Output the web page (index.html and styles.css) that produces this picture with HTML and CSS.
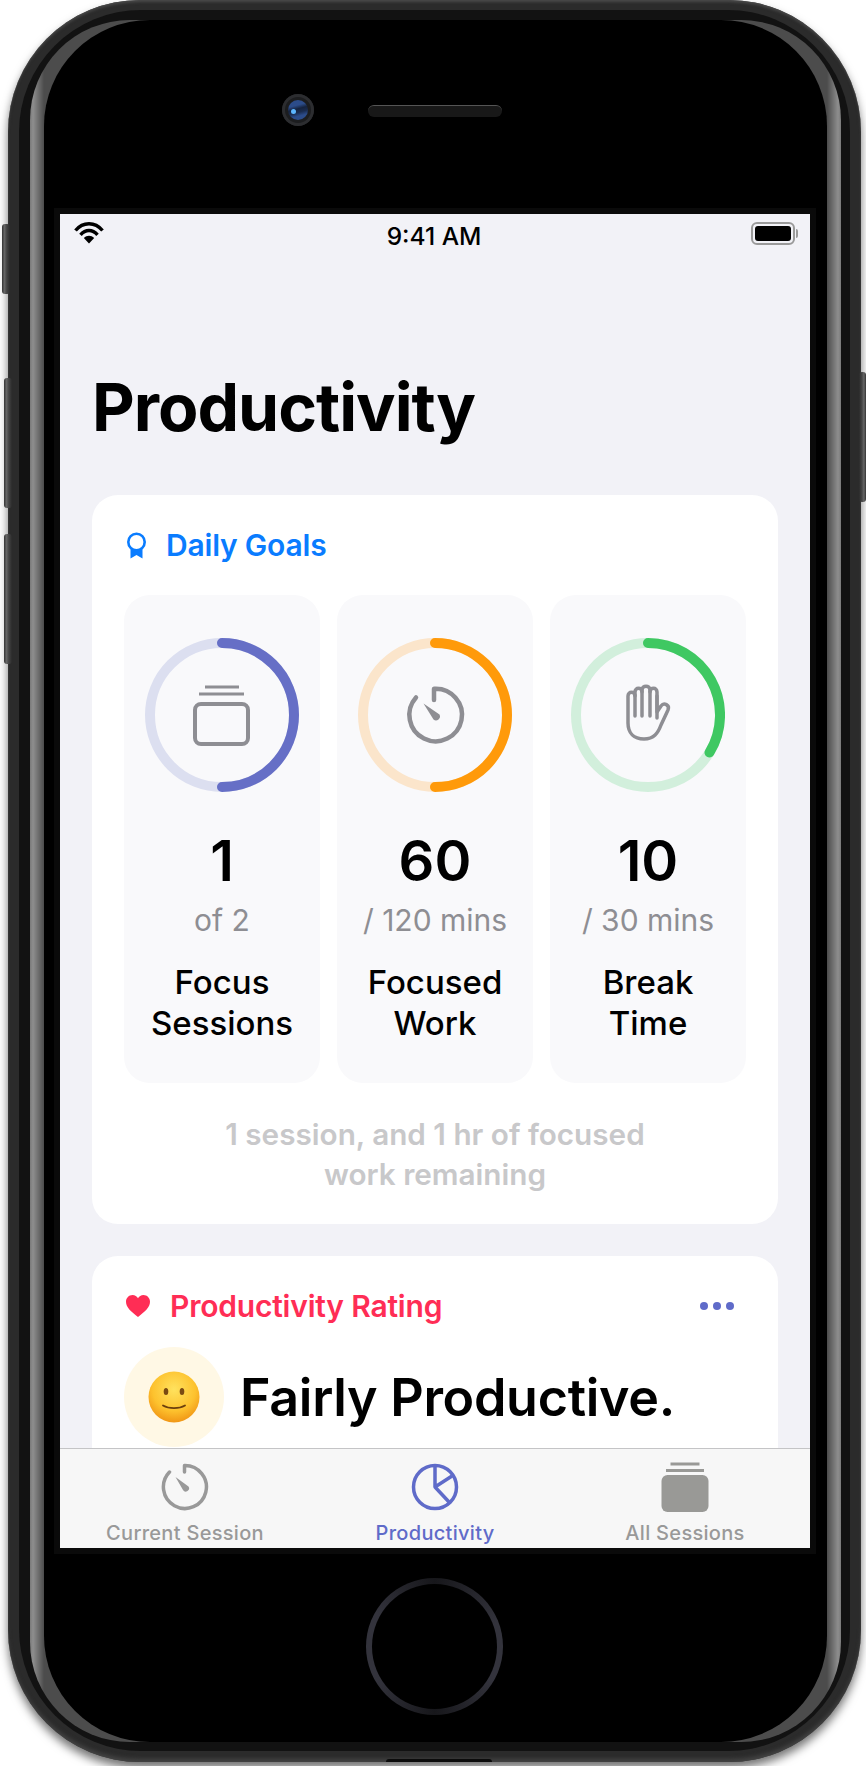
FILE: index.html
```html
<!DOCTYPE html>
<html>
<head>
  <meta charset="utf-8" />
  <meta name="viewport" content="width=device-width, initial-scale=1" />
  <title>Productivity</title>
  <link rel="stylesheet" href="styles.css">
</head>
<body>
  <div class="phone">
    <div class="side-btn mute"></div>
    <div class="side-btn vol-up"></div>
    <div class="side-btn vol-down"></div>
    <div class="side-btn power"></div>

    <div class="rim">
      <div class="edge">
        <div class="glass">
          <div class="top-sensors">
            <div class="camera"><div class="lens"><div class="lens-dot"></div></div></div>
            <div class="speaker"></div>
          </div>

          <div class="screen">
            <div class="status-bar">
              <svg class="wifi" width="30" height="22" viewBox="0 0 30 22">
                <path d="M1.500 8.500C9 -.5 21 -.5 28.500 8.500" fill="none" stroke="#000" stroke-width="3.400"/>
                <path d="M6.500 12.800C11.500 7 18.500 7 23.500 12.800" fill="none" stroke="#000" stroke-width="3.400"/>
                <path d="M15 21.500L9.800 16C13 13 17 13 20.200 16z" fill="#000"/>
              </svg>
              <div class="clock">9:41 AM</div>
              <div class="battery"><div class="battery-fill"></div></div>
            </div>

            <div class="content">
              <h1 class="page-title">Productivity</h1>

              <div class="card goals-card">
                <div class="card-head">
                  <svg class="head-icon" width="21" height="27" viewBox="0 0 21 27">
                    <circle cx="10.500" cy="10" r="8.200" fill="none" stroke="#0a7cff" stroke-width="2.600"/>
                    <path d="M4.500 16.500V26.500L10.500 23L16.500 26.500V16.500L10.500 19z" fill="#0a7cff"/>
                  </svg>
                  <span class="head-title blue">Daily Goals</span>
                </div>

                <div class="tiles">
                  <div class="tile">
                    <svg class="ring" width="154" height="154" viewBox="0 0 154 154">
                      <circle cx="77" cy="77" r="72" fill="none" stroke="#dcdff0" stroke-width="10"/>
                      <path d="M77 5A72 72 0 0 1 77 149" fill="none" stroke="#666fc6" stroke-width="10" stroke-linecap="round"/>
                      <g fill="none" stroke="#8e8e93">
                        <rect x="50" y="66" width="53" height="40" rx="6" stroke-width="4"/>
                        <path d="M54 56H99" stroke-width="3"/>
                        <path d="M60 49H94" stroke-width="3"/>
                      </g>
                    </svg>
                    <div class="tile-num">1</div>
                    <div class="tile-sub">of 2</div>
                    <div class="tile-label">Focus Sessions</div>
                  </div>

                  <div class="tile">
                    <svg class="ring" width="154" height="154" viewBox="0 0 154 154">
                      <circle cx="77" cy="77" r="72" fill="none" stroke="#fbe5cb" stroke-width="10"/>
                      <path d="M77 5A72 72 0 0 1 77 149" fill="none" stroke="#ff9a0a" stroke-width="10" stroke-linecap="round"/>
                      <path d="M76 62V50.700A26.300 26.300 0 1 1 58 59.500" fill="none" stroke="#8e8e93" stroke-width="4.500" stroke-linecap="round" stroke-linejoin="round"/>
                      <path d="M65.500 65.500L75.500 81.500A4 4 0 0 0 81.500 76.500z" fill="#8e8e93"/>
                    </svg>
                    <div class="tile-num">60</div>
                    <div class="tile-sub">/ 120 mins</div>
                    <div class="tile-label">Focused Work</div>
                  </div>

                  <div class="tile">
                    <svg class="ring" width="154" height="154" viewBox="0 0 154 154">
                      <circle cx="77" cy="77" r="72" fill="none" stroke="#d2efdc" stroke-width="10"/>
                      <path d="M77 5A72 72 0 0 1 138.500 114.500" fill="none" stroke="#3fc862" stroke-width="10" stroke-linecap="round"/>
                      <g transform="translate(0 2)" fill="none" stroke="#8e8e93" stroke-width="3.500" stroke-linecap="round" stroke-linejoin="round">
                        <path d="M57 79V56c0-5 7-5 7 0V52c0-5 7-5 7 0V50c0-5 8-5 8 0v2c0-5 7-5 7 0v20l4-6c3-4 9-1 7 4l-7 15c-3 8-7 14-17 14s-16-6-16-16z"/>
                        <path d="M64 55v21M71 51v25M79 51v25M86 56v22"/>
                      </g>
                    </svg>
                    <div class="tile-num">10</div>
                    <div class="tile-sub">/ 30 mins</div>
                    <div class="tile-label">Break Time</div>
                  </div>
                </div>

                <p class="goals-note">1 session, and 1 hr of focused work remaining</p>
              </div>

              <div class="card rating-card">
                <div class="card-head">
                  <svg class="head-icon" width="24" height="22" viewBox="0 0 24 22">
                    <path d="M12 22C5 16.500 0 12.500 0 6.800C0 2.800 3 0 6.500 0C9 0 11 1.300 12 3.300C13 1.300 15 0 17.500 0C21 0 24 2.800 24 6.800C24 12.500 19 16.500 12 22z" fill="#ff2d55"/>
                  </svg>
                  <span class="head-title pink">Productivity Rating</span>
                  <div class="dots"><i></i><i></i><i></i></div>
                </div>
                <div class="rating-row">
                  <div class="emoji-bubble">
                    <svg width="52" height="52" viewBox="0 0 52 52">
                      <defs>
                        <radialGradient id="faceFill" cx="50%" cy="35%" r="70%">
                          <stop offset="0" stop-color="#ffe25e"/>
                          <stop offset="0.6" stop-color="#fdc22e"/>
                          <stop offset="1" stop-color="#ee8d10"/>
                        </radialGradient>
                      </defs>
                      <circle cx="26" cy="26" r="25.500" fill="url(#faceFill)"/>
                      <ellipse cx="18" cy="20.500" rx="2.300" ry="3.600" fill="#7a4a12"/>
                      <ellipse cx="34" cy="20.500" rx="2.300" ry="3.600" fill="#7a4a12"/>
                      <path d="M15 34.500C21 38 31 38 37 34.500" fill="none" stroke="#6b3f0e" stroke-width="1.800" stroke-linecap="round"/>
                    </svg>
                  </div>
                  <div class="rating-text">Fairly Productive.</div>
                </div>
              </div>
            </div>

            <div class="tab-bar">
              <div class="tab">
                <svg width="48" height="50" viewBox="0 0 48 50">
                  <path d="M23.500 10V3.500A21.500 21.500 0 1 1 8.500 10" fill="none" stroke="#999" stroke-width="3.500" stroke-linecap="round" stroke-linejoin="round"/>
                  <path d="M14.500 15L22 28A3.200 3.200 0 0 0 27.500 24.500z" fill="#999"/>
                </svg>
                <span class="tab-label">Current Session</span>
              </div>
              <div class="tab active">
                <svg width="48" height="50" viewBox="0 0 48 50">
                  <circle cx="24" cy="25" r="21.500" fill="none" stroke="#5f6bc9" stroke-width="3.500"/>
                  <path d="M24 4V25L41 14M24 25L38 40" fill="none" stroke="#5f6bc9" stroke-width="3.500" stroke-linejoin="round"/>
                </svg>
                <span class="tab-label">Productivity</span>
              </div>
              <div class="tab">
                <svg width="48" height="50" viewBox="0 0 48 50">
                  <rect x="0.500" y="13" width="47" height="37" rx="6" fill="#999996"/>
                  <path d="M5 8.500H43" stroke="#999996" stroke-width="3" fill="none"/>
                  <path d="M9.500 2H38.500" stroke="#999996" stroke-width="3" fill="none"/>
                </svg>
                <span class="tab-label">All Sessions</span>
              </div>
            </div>
          </div>

          <div class="home-area">
            <div class="home-btn"></div>
          </div>
        </div>
      </div>
    </div>
    <div class="port"></div>
  </div>
</body>
</html>
```

FILE: styles.css
```css
* {
  margin: 0;
  padding: 0;
  box-sizing: border-box;
}

html, body {
  height: 1766px;
  overflow: hidden;
  background: #fff;
}

body {
  padding-left: 8px;
  font-family: 'Inter', 'Liberation Sans', sans-serif;
}

.phone {
  position: relative;
  width: 853px;
  height: 1762px;
  border-radius: 132px;
  padding: 10px 11px 11px 11px;
  background: #2b2b2b;
  box-shadow: 0 6px 10px rgba(0, 0, 0, 0.55), inset 0 3px 3px -1px #4a4a4a, inset 0 -4px 4px -1px #444;
}

.side-btn {
  position: absolute;
  background: linear-gradient(to right, #333, #666 30%, #444 60%, #2b2b2b);
  border-radius: 3px;
  width: 8px;
}

.mute { left: -6px; top: 224px; height: 70px; }
.vol-up { left: -4px; top: 378px; height: 130px; }
.vol-down { left: -4px; top: 534px; height: 130px; }
.power { left: 851px; top: 372px; height: 130px; width: 7px; background: linear-gradient(to right, #2b2b2b, #444 40%, #666 70%, #333); }

.port {
  position: absolute;
  left: 378px;
  bottom: 0;
  width: 106px;
  height: 3px;
  background: #0c0c0c;
  border-radius: 3px 3px 0 0;
}

.rim {
  height: 100%;
  border-radius: 122px;
  background: #121212;
  padding: 10px 9px 9px 11px;
}

.edge {
  height: 100%;
  border-radius: 100px;
  background: linear-gradient(to right, #7a7a7a 0, #8e8e8e 3px, #4c4c4c 14px, #4c4c4c calc(100% - 14px), #8e8e8e calc(100% - 3px), #7a7a7a 100%);
  padding: 0 14px;
}

.glass {
  height: 100%;
  border-radius: 106px;
  background: #000;
  padding: 0 17px 0 16px;
}

.top-sensors {
  height: 194px;
  display: flex;
  align-items: flex-start;
  justify-content: center;
  gap: 54px;
  padding-top: 74px;
  padding-right: 86px;
}

.camera {
  width: 32px;
  height: 32px;
  border-radius: 50%;
  background: #1c1d1f;
  box-shadow: inset 0 0 0 3px #2c2d30;
  display: flex;
  align-items: center;
  justify-content: center;
}

.lens {
  position: relative;
  width: 20px;
  height: 20px;
  border-radius: 50%;
  background: linear-gradient(165deg, #2c4c8a 0, #2c4c8a 30%, #15233f 45%, #1a2c50 60%, #2c4c8a 75%);
}

.lens-dot {
  position: absolute;
  left: 3px;
  top: 9px;
  width: 5px;
  height: 5px;
  border-radius: 50%;
  background: #5db6ff;
}

.speaker {
  width: 134px;
  height: 12px;
  margin-top: 11px;
  border-radius: 6px;
  background: #181818;
  border-top: 1px solid #555;
}

.screen {
  position: relative;
  width: 750px;
  height: 1334px;
  background: #f2f2f7;
  box-shadow: 0 0 0 6px #0a0a0a;
  overflow: hidden;
  display: flex;
  flex-direction: column;
}

.status-bar {
  height: 40px;
  padding: 8px 15px 0 14px;
  display: flex;
  align-items: flex-start;
  justify-content: space-between;
}

.clock {
  font-size: 24.500px;
  font-weight: 500;
  line-height: 26px;
  color: #000;
  margin: 1px 0 0 13px;
}

.battery {
  width: 44px;
  height: 23px;
  border: 2px solid #9a9a9a;
  border-radius: 6px;
  padding: 2px;
  position: relative;
}

.battery::after {
  content: "";
  position: absolute;
  right: -5px;
  top: 5px;
  width: 2px;
  height: 9px;
  border-radius: 0 2px 2px 0;
  background: #9a9a9a;
}

.battery-fill {
  height: 100%;
  border-radius: 3px;
  background: #000;
}

.content {
  flex: 1;
  min-height: 0;
  overflow: hidden;
  padding: 0 32px;
}

.page-title {
  font-size: 66px;
  font-weight: 700;
  line-height: 80px;
  letter-spacing: -1px;
  color: #000;
  margin-top: 113px;
  margin-bottom: 48px;
}

.card {
  background: #fff;
  border-radius: 26px;
  padding: 32px;
}

.goals-card {
  height: 729px;
  margin-bottom: 32px;
}

.rating-card {
  height: 300px;
}

.card-head {
  display: flex;
  align-items: center;
  height: 36px;
}

.head-icon {
  flex-shrink: 0;
  margin-left: 2px;
  margin-right: 19px;
}

.rating-card .head-icon {
  margin-right: 20px;
}

.head-title {
  font-size: 30px;
  font-weight: 600;
  letter-spacing: -0.2px;
}

.blue { color: #0a7cff; }
.pink { color: #ff2d55; }

.dots {
  margin-left: auto;
  margin-right: 12px;
  display: flex;
  gap: 5px;
}

.dots i {
  display: block;
  width: 8px;
  height: 8px;
  border-radius: 50%;
  background: #5f6bc9;
}

.tiles {
  display: grid;
  grid-template-columns: repeat(3, 1fr);
  gap: 17px;
  margin-top: 32px;
}

.tile {
  height: 488px;
  background: #f9f9fb;
  border-radius: 26px;
  padding-top: 43px;
  display: flex;
  flex-direction: column;
  align-items: center;
  text-align: center;
}

.tile-num {
  font-size: 56px;
  font-weight: 600;
  line-height: 62px;
  color: #000;
  margin-top: 38px;
}

.tile-sub {
  font-size: 30px;
  font-weight: 400;
  line-height: 34px;
  color: #8e8e93;
  margin-top: 11px;
}

.tile-label {
  font-size: 33px;
  font-weight: 500;
  line-height: 41px;
  color: #000;
  margin-top: 25px;
  width: 170px;
}

.goals-note {
  font-size: 29.700px;
  font-weight: 600;
  line-height: 40px;
  color: #c8c8ca;
  text-align: center;
  width: 460px;
  margin: 31px auto 0;
}

.rating-row {
  display: flex;
  align-items: center;
  gap: 16px;
  margin-top: 23px;
}

.emoji-bubble {
  width: 100px;
  height: 100px;
  border-radius: 50%;
  background: #fff8e5;
  display: flex;
  align-items: center;
  justify-content: center;
}

.rating-text {
  font-size: 52px;
  font-weight: 600;
  color: #000;
  letter-spacing: -0.3px;
}

.tab-bar {
  position: absolute;
  left: 0;
  right: 0;
  bottom: 0;
  height: 100px;
  background: #f7f7f7;
  border-top: 1px solid #c4c4c6;
  display: grid;
  grid-template-columns: repeat(3, 1fr);
}

.tab {
  display: flex;
  flex-direction: column;
  align-items: center;
  padding-top: 13px;
  color: #999;
}

.tab-label {
  font-size: 20px;
  font-weight: 500;
  line-height: 24px;
  letter-spacing: 0.3px;
  margin-top: 9px;
}

.tab.active {
  color: #5f6bc9;
}

.home-area {
  display: flex;
  justify-content: center;
  padding-top: 30px;
  padding-right: 2px;
}

.home-btn {
  width: 137px;
  height: 137px;
  border-radius: 50%;
  padding: 6px;
  background: conic-gradient(#17171b 0deg, #33333c 70deg, #33333c 120deg, #17171b 180deg, #33333c 240deg, #33333c 300deg, #17171b 360deg);
}

.home-btn::before {
  content: "";
  display: block;
  height: 100%;
  border-radius: 50%;
  background: #000;
}
```
